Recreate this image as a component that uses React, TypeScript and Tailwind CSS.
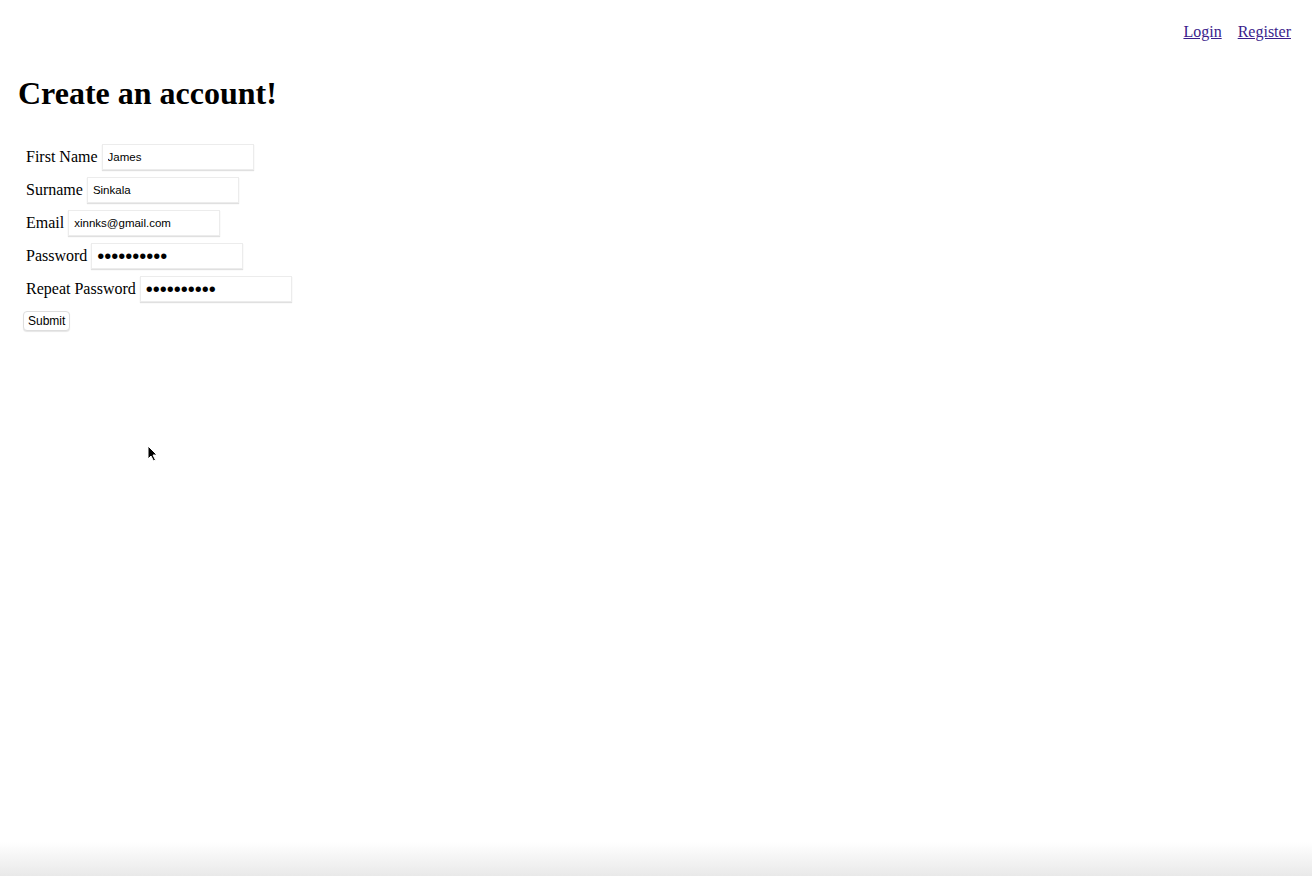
import React, { useState } from 'react';

const FIELDS = [
  { id: 'firstName', label: 'First Name', type: 'text', value: 'James' },
  { id: 'surname', label: 'Surname', type: 'text', value: 'Sinkala' },
  { id: 'email', label: 'Email', type: 'email', value: 'xinnks@gmail.com' },
  { id: 'password', label: 'Password', type: 'password', value: 'secret1234' },
  { id: 'repeatPassword', label: 'Repeat Password', type: 'password', value: 'secret1234' },
] as const;

const App: React.FC = () => {
  const [values, setValues] = useState<Record<string, string>>(
    Object.fromEntries(FIELDS.map((f) => [f.id, f.value]))
  );

  return (
    <div className="relative flex flex-col h-[876px] bg-white text-black font-['Liberation_Serif','Times_New_Roman',serif]">
      {/* Top nav */}
      <nav className="flex justify-end gap-4 pt-[20px] pr-[21px] text-[16px]">
        <a href="#" className="underline text-[#3a1d8c]">Login</a>
        <a href="#" className="underline text-[#3a1d8c]">Register</a>
      </nav>

      <main className="pl-[18px]">
        <h1 className="mt-[29px] text-[32px] font-bold leading-[40px]">Create an account!</h1>

        {/* Form */}
        <form className="mt-[31px] pl-[8px] flex flex-col gap-[7px]" onSubmit={(e) => e.preventDefault()}>
          {FIELDS.map((f) => (
            <div key={f.id} className="flex items-center h-[26px] text-[16px]">
              <label htmlFor={f.id} className="mr-[4px]">{f.label}</label>
              <input
                id={f.id}
                type={f.type}
                value={values[f.id]}
                onChange={(e) => setValues({ ...values, [f.id]: e.target.value })}
                className={
                  f.type === 'password'
                    ? "w-[152px] h-[26px] px-[5px] border border-[#ececec] shadow-[0_1px_1px_rgba(0,0,0,0.12)] outline-none text-[20px] text-black font-['Liberation_Sans',Arial,sans-serif]"
                    : "w-[152px] h-[26px] px-[5px] border border-[#ececec] shadow-[0_1px_1px_rgba(0,0,0,0.12)] outline-none text-[11.5px] text-black font-['Liberation_Sans',Arial,sans-serif]"
                }
              />
            </div>
          ))}
          <div className="-mt-[1px] -ml-[3px]">
            <button
              type="submit"
              className="h-[20px] px-[4px] rounded-[4px] border border-[#dedede] bg-white shadow-[0_1px_1px_rgba(0,0,0,0.1)] text-[12px] leading-none font-['Liberation_Sans',Arial,sans-serif]"
            >
              Submit
            </button>
          </div>
        </form>
      </main>

      {/* Mouse pointer */}
      <svg className="absolute left-[147px] top-[445px]" width="11" height="17" viewBox="0 0 11 17">
        <path d="M1 1 L1 14 L4 11 L6.5 16 L8.5 15 L6 10 L10 10 Z" fill="#000" stroke="#fff" strokeWidth="1" strokeLinejoin="round" />
      </svg>

      <div className="flex-1" />
      {/* Bottom fade */}
      <div className="h-[34px] bg-gradient-to-b from-white to-[#e9e9e9]" />
    </div>
  );
};

export default App;
